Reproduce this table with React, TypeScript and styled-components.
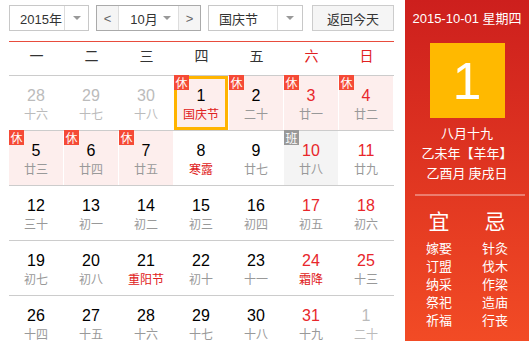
import React from "react";
import styled, { createGlobalStyle } from "styled-components";

const Global = createGlobalStyle`
  html, body { margin: 0; padding: 0; background: #fff; overflow: hidden; }
  body { font-family: "Liberation Sans", "Noto Sans CJK SC", sans-serif; }
`;

const Page = styled.div`
  display: flex;
  width: 529px;
  height: 341px;
  overflow: hidden;
`;

const Main = styled.div`
  width: 385px;
  padding: 5px 11px 0 9px;
`;

const Toolbar = styled.div`
  display: flex;
  height: 26px;
  align-items: stretch;
`;

const Select = styled.div<{ $w: number; $ml?: number }>`
  box-sizing: border-box;
  width: ${(p) => p.$w}px;
  margin-left: ${(p) => p.$ml ?? 0}px;
  display: flex;
  border: 1px solid #c8c8c8;
  background: #fff;
  font-size: 13px;
  color: #333;
`;

const SelectText = styled.div<{ $pl: number }>`
  flex: 1;
  display: flex;
  align-items: center;
  padding-left: ${(p) => p.$pl}px;
  border-right: 1px solid #ddd;
`;

const Caret = styled.div<{ $w: number }>`
  width: ${(p) => p.$w}px;
  display: flex;
  align-items: center;
  justify-content: center;
  &::after {
    content: "";
    border-left: 4px solid transparent;
    border-right: 4px solid transparent;
    border-top: 4px solid #999;
  }
`;

const MonthGroup = styled.div`
  box-sizing: border-box;
  width: 105px;
  margin-left: 7px;
  display: flex;
  border: 1px solid #aaa;
  font-size: 13px;
  color: #333;
`;

const NavBtn = styled.div<{ $side: "l" | "r" }>`
  width: 21px;
  background: #f5f5f5;
  display: flex;
  align-items: center;
  justify-content: center;
  color: #666;
  ${(p) => (p.$side === "l" ? "border-right: 1px solid #ddd;" : "border-left: 1px solid #ddd;")}
`;

const MonthText = styled.div`
  flex: 1;
  display: flex;
  align-items: center;
  justify-content: center;
  gap: 5px;
  padding-left: 4px;
  &::after {
    content: "";
    border-left: 4px solid transparent;
    border-right: 4px solid transparent;
    border-top: 4px solid #999;
  }
`;

const TodayBtn = styled.div`
  box-sizing: border-box;
  width: 82px;
  margin-left: 9px;
  border: 1px solid #ccc;
  background: #f5f5f5;
  display: flex;
  align-items: center;
  justify-content: center;
  font-size: 13px;
  color: #333;
`;

const RedLine = styled.div`
  margin-top: 10px;
  height: 1px;
  background: #e84c3d;
`;

const WeekRow = styled.div`
  display: grid;
  grid-template-columns: repeat(7, 55px);
  height: 33px;
  border-bottom: 1px solid #ccc;
`;

const WeekDay = styled.div<{ $red?: boolean }>`
  text-align: center;
  line-height: 28px;
  font-size: 14px;
  color: ${(p) => (p.$red ? "#e02020" : "#333")};
`;

const Row = styled.div`
  display: grid;
  grid-template-columns: repeat(7, 55px);
  height: 54px;
  border-bottom: 1px solid #ccc;
`;

const Cell = styled.div<{ $bg: string; $sel?: boolean }>`
  position: relative;
  box-sizing: border-box;
  width: 54px;
  height: 54px;
  background: ${(p) => p.$bg};
  border: ${(p) => (p.$sel ? "3px solid #ffb400" : "none")};
  padding-top: ${(p) => (p.$sel ? 7 : 10)}px;
  text-align: center;
`;

const Num = styled.div<{ $c: string }>`
  font-size: 16px;
  line-height: 20px;
  color: ${(p) => p.$c};
`;

const Lunar = styled.div<{ $c: string }>`
  font-size: 12px;
  line-height: 16px;
  color: ${(p) => p.$c};
  font-family: "Noto Sans CJK SC", sans-serif;
`;

const Badge = styled.div<{ $work?: boolean }>`
  position: absolute;
  top: -1px;
  left: 0;
  width: 15px;
  height: 15px;
  background: ${(p) => (p.$work ? "#999" : "#f54a36")};
  color: #fff;
  font-size: 12px;
  line-height: 15px;
  text-align: center;
  font-family: "Noto Sans CJK SC", sans-serif;
`;

const SelBadge = styled(Badge)`
  top: -4px;
  left: -3px;
`;

const Side = styled.div`
  width: 124px;
  height: 341px;
  background: linear-gradient(#cd1f1d, #f24b25);
  color: #fff;
  display: flex;
  flex-direction: column;
  align-items: center;
  font-family: "Liberation Sans", "Noto Sans CJK SC", sans-serif;
`;

const DateLine = styled.div`
  margin-top: 10px;
  font-size: 13px;
  line-height: 18px;
`;

const BigBox = styled.div`
  margin-top: 15px;
  width: 75px;
  height: 75px;
  background: #ffb900;
  display: flex;
  align-items: center;
  justify-content: center;
  font-size: 52px;
  color: #fff;
`;

const InfoLine = styled.div`
  font-size: 13px;
  line-height: 20px;
  font-family: "Noto Sans CJK SC", sans-serif;
`;

const Divider = styled.div`
  margin: 11px 0 0 6px;
  width: 110px;
  height: 2px;
  background: rgba(255, 255, 255, 0.35);
`;

const YiJi = styled.div`
  margin-top: 10px;
  display: grid;
  grid-template-columns: 56px 56px;
  font-family: "Noto Sans CJK SC", sans-serif;
  text-align: center;
`;

const YiHead = styled.div`
  font-size: 21px;
  line-height: 28px;
  margin-bottom: 5px;
`;

const YiItem = styled.div`
  font-size: 13px;
  line-height: 18px;
`;

type D = {
  n: number;
  l: string;
  other?: boolean;
  rest?: boolean;
  work?: boolean;
  red?: boolean;
  lred?: boolean;
  sel?: boolean;
};

const days: D[] = [
  { n: 28, l: "十六", other: true },
  { n: 29, l: "十七", other: true },
  { n: 30, l: "十八", other: true },
  { n: 1, l: "国庆节", rest: true, lred: true, sel: true },
  { n: 2, l: "二十", rest: true },
  { n: 3, l: "廿一", rest: true, red: true },
  { n: 4, l: "廿二", rest: true, red: true },
  { n: 5, l: "廿三", rest: true },
  { n: 6, l: "廿四", rest: true },
  { n: 7, l: "廿五", rest: true },
  { n: 8, l: "寒露", lred: true },
  { n: 9, l: "廿七" },
  { n: 10, l: "廿八", work: true, red: true },
  { n: 11, l: "廿九", red: true },
  { n: 12, l: "三十" },
  { n: 13, l: "初一" },
  { n: 14, l: "初二" },
  { n: 15, l: "初三" },
  { n: 16, l: "初四" },
  { n: 17, l: "初五", red: true },
  { n: 18, l: "初六", red: true },
  { n: 19, l: "初七" },
  { n: 20, l: "初八" },
  { n: 21, l: "重阳节", lred: true },
  { n: 22, l: "初十" },
  { n: 23, l: "十一" },
  { n: 24, l: "霜降", red: true, lred: true },
  { n: 25, l: "十三", red: true },
  { n: 26, l: "十四" },
  { n: 27, l: "十五" },
  { n: 28, l: "十六" },
  { n: 29, l: "十七" },
  { n: 30, l: "十八" },
  { n: 31, l: "十九", red: true },
  { n: 1, l: "二十", other: true },
];

const weekdays = ["一", "二", "三", "四", "五", "六", "日"];
const yi = ["嫁娶", "订盟", "纳采", "祭祀", "祈福"];
const ji = ["针灸", "伐木", "作梁", "造庙", "行丧"];

function DayCell({ d }: { d: D }) {
  const bg = d.rest ? "#fdeeed" : d.work ? "#f4f4f4" : "#fff";
  const numC = d.other ? "#bbb" : d.red ? "#e8262b" : "#000";
  const lunC = d.other ? "#bbb" : d.lred ? "#e02020" : "#999";
  const B = d.sel ? SelBadge : Badge;
  return (
    <Cell $bg={bg} $sel={d.sel}>
      {d.rest && <B>休</B>}
      {d.work && <B $work>班</B>}
      <Num $c={numC}>{d.n}</Num>
      <Lunar $c={lunC}>{d.l}</Lunar>
    </Cell>
  );
}

export default function App() {
  const rows: D[][] = [];
  for (let i = 0; i < days.length; i += 7) rows.push(days.slice(i, i + 7));
  return (
    <>
      <Global />
      <Page>
        <Main>
          <Toolbar>
            <Select $w={80}>
              <SelectText $pl={10}>2015年</SelectText>
              <Caret $w={23} />
            </Select>
            <MonthGroup>
              <NavBtn $side="l">&lt;</NavBtn>
              <MonthText>10月</MonthText>
              <NavBtn $side="r">&gt;</NavBtn>
            </MonthGroup>
            <Select $w={95} $ml={7}>
              <SelectText $pl={10}>国庆节</SelectText>
              <Caret $w={24} />
            </Select>
            <TodayBtn>返回今天</TodayBtn>
          </Toolbar>
          <RedLine />
          <WeekRow>
            {weekdays.map((w, i) => (
              <WeekDay key={w} $red={i >= 5}>
                {w}
              </WeekDay>
            ))}
          </WeekRow>
          {rows.map((r, i) => (
            <Row key={i}>
              {r.map((d, j) => (
                <DayCell key={j} d={d} />
              ))}
            </Row>
          ))}
        </Main>
        <Side>
          <DateLine>2015-10-01 星期四</DateLine>
          <BigBox>1</BigBox>
          <InfoLine style={{ marginTop: 5 }}>八月十九</InfoLine>
          <InfoLine>乙未年【羊年】</InfoLine>
          <InfoLine>乙酉月 庚戌日</InfoLine>
          <Divider />
          <YiJi>
            <div>
              <YiHead>宜</YiHead>
              {yi.map((t) => (
                <YiItem key={t}>{t}</YiItem>
              ))}
            </div>
            <div>
              <YiHead>忌</YiHead>
              {ji.map((t) => (
                <YiItem key={t}>{t}</YiItem>
              ))}
            </div>
          </YiJi>
        </Side>
      </Page>
    </>
  );
}
